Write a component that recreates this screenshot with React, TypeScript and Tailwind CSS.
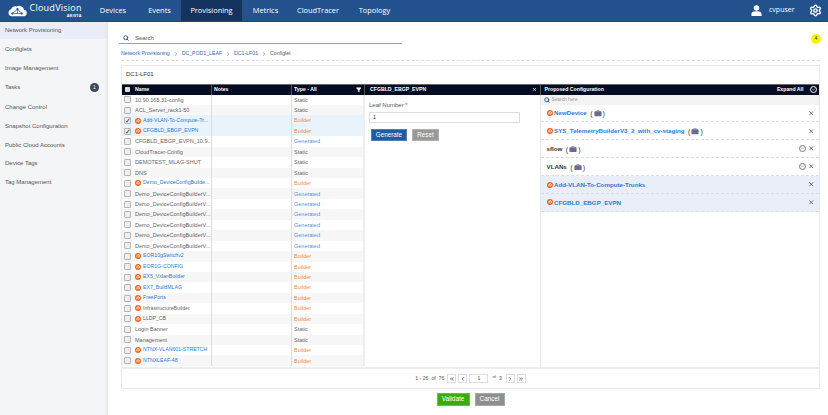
import { ChevronLeft, ChevronRight, ChevronsLeft, ChevronsRight, Filter, Search, Settings, X } from "lucide-react";

const navItems = [
  { title: "Devices", width: "w-[50px]" },
  { title: "Events", width: "w-[43px]" },
  { title: "Provisioning", width: "w-[61px]", active: true },
  { title: "Metrics", width: "w-[47px]" },
  { title: "CloudTracer", width: "w-[58px]" },
  { title: "Topology", width: "w-[55px]" },
];

const sideItems = ["Network Provisioning", "Configlets", "Image Management", "Tasks", "Change Control", "Snapshot Configuration", "Public Cloud Accounts", "Device Tags", "Tag Management"];

type Row = { name: string; type: "Static" | "Builder" | "Generated"; builder?: boolean; checked?: boolean; plain?: boolean };

const rows: Row[] = [
  { name: "10.90.165.31-config", type: "Static" },
  { name: "ACL_Server_rack1-50", type: "Static" },
  { name: "Add-VLAN-To-Compute-Tr...", type: "Builder", builder: true, checked: true },
  { name: "CFGBLD_EBGP_EVPN", type: "Builder", builder: true, checked: true },
  { name: "CFGBLD_EBGP_EVPN_10.9...", type: "Generated" },
  { name: "CloudTracer-Config", type: "Static" },
  { name: "DEMOTEST_MLAG-SHUT", type: "Static" },
  { name: "DNS", type: "Static" },
  { name: "Demo_DeviceConfigBuilde...", type: "Builder", builder: true },
  { name: "Demo_DeviceConfigBuilderV...", type: "Generated" },
  { name: "Demo_DeviceConfigBuilderV...", type: "Generated" },
  { name: "Demo_DeviceConfigBuilderV...", type: "Generated" },
  { name: "Demo_DeviceConfigBuilderV...", type: "Generated" },
  { name: "Demo_DeviceConfigBuilderV...", type: "Generated" },
  { name: "Demo_DeviceConfigBuilderV...", type: "Generated" },
  { name: "EOR10gSwitchv2", type: "Builder", builder: true },
  { name: "EOR1G-CONFIG", type: "Builder", builder: true },
  { name: "EX5_VxlanBuilder", type: "Builder", builder: true },
  { name: "EX7_BuildMLAG", type: "Builder", builder: true },
  { name: "FreePorts", type: "Builder", builder: true },
  { name: "InfrastructureBuilder", type: "Builder", builder: true, plain: true },
  { name: "LLDP_CB", type: "Builder", builder: true, plain: true },
  { name: "Login Banner", type: "Static" },
  { name: "Management", type: "Static" },
  { name: "NTNX-VLAN601-STRETCH", type: "Builder", builder: true },
  { name: "NTNXLEAF-48", type: "Builder", builder: true },
];

const proposed = [
  { name: "NewDevice", builder: true, box: true },
  { name: "SYS_TelemetryBuilderV3_2_with_cv-staging", builder: true, box: true },
  { name: "sflow", box: true, expand: true },
  { name: "VLANs", box: true, expand: true },
  { name: "Add-VLAN-To-Compute-Trunks", builder: true, added: true },
  { name: "CFGBLD_EBGP_EVPN", builder: true, added: true },
];

const typeColor = {
  Static: "text-[#666666]",
  Builder: "text-[#f58b3c]",
  Generated: "text-[#5b8fe0]",
};

function BuilderIcon() {
  return (
    <svg viewBox="0 0 12 12" className="w-[6px] h-[6px] shrink-0">
      <circle cx="6" cy="6" r="6" fill="#f2641e" />
      <path d="M4 8.5 L4 6 A2.4 2.4 0 1 1 6.6 8.2" fill="none" stroke="#ffffff" strokeWidth="1.8" />
    </svg>
  );
}

function BoxIcon() {
  return (
    <span className="flex items-center text-[7px] leading-none font-normal text-[#333333] gap-[1px]">
      (
      <svg viewBox="0 0 12 10" className="w-[8px] h-[6.5px]">
        <path d="M4 2 V1 H8 V2" fill="none" stroke="#6c6a94" strokeWidth="1" />
        <rect x="0.5" y="2" width="11" height="7.5" rx="1.2" fill="#6c6a94" />
      </svg>
      )
    </span>
  );
}

function ExpandIcon() {
  return (
    <span className="flex items-center justify-center w-[7px] h-[7px] rounded-full border border-current">
      <ChevronRight size={5} strokeWidth={3} className="rotate-90" />
    </span>
  );
}

function Checkbox({ checked }: { checked?: boolean }) {
  return (
    <span className="flex items-center justify-center w-[5px] h-[5px] rounded-[1px] border border-[#b5b5b5] bg-[#eeeeee] box-content shrink-0">
      {checked && <span className="text-[7px] leading-none text-[#222222]">✓</span>}
    </span>
  );
}

function Logo() {
  return (
    <div className="flex items-center w-[88px] pl-[7px] gap-[1.5px] shrink-0">
      <svg viewBox="0 0 24 15" className="w-[21px] h-[13px]">
        <path d="M5 14 A4 4 0 0 1 4.5 6.2 A5 5 0 0 1 11 3 A5.5 5.5 0 0 1 19.5 6.5 A3.8 3.8 0 0 1 19.5 14 Z" fill="#ffffff" />
        <path d="M6 11 L12 6 L17 11 M6 11 H17 M12 6 V11" fill="none" stroke="#24528f" strokeWidth="0.8" />
        <circle cx="6" cy="11" r="1.3" fill="#24528f" />
        <circle cx="12" cy="6" r="1.3" fill="#24528f" />
        <circle cx="17" cy="11" r="1.3" fill="#24528f" />
      </svg>
      <div className="flex flex-col items-end leading-none text-white">
        <span className="text-[9px] tracking-[0.25px]">CloudVision</span>
        <span className="text-[3.8px] font-bold tracking-[0.3px] mt-[2px]">ARISTA</span>
      </div>
    </div>
  );
}

function UserIcon() {
  return (
    <svg viewBox="0 0 12 12" className="w-[11px] h-[11px]">
      <circle cx="6" cy="3.2" r="3" fill="#ffffff" />
      <path d="M0.5 12 V9.6 C0.5 7.6 2.6 6.8 6 6.8 C9.4 6.8 11.5 7.6 11.5 9.6 V12 Z" fill="#ffffff" />
    </svg>
  );
}

export default function App() {
  return (
    <div className="w-[828px] h-[415px] overflow-hidden bg-white flex flex-col font-['Liberation_Sans',sans-serif] text-[#444444]">
      <header className="h-[22px] shrink-0 flex items-stretch bg-[#24528f] border-b border-[#1c4a86] font-['Open_Sans',sans-serif] text-white">
        <Logo />
        {navItems.map((item) => (
          <div key={item.title} className={`${item.width} flex items-center justify-center text-[7.4px] ${item.active ? "bg-[#14335f]" : ""}`}>
            {item.title}
          </div>
        ))}
        <div className="flex-1" />
        <div className="flex items-center">
          <UserIcon />
          <span className="ml-[7px] text-[7px] w-[31px]">cvpuser</span>
          <Settings size={13} strokeWidth={2.6} className="ml-[9px] mr-[6px]" />
        </div>
      </header>

      <div className="flex-1 flex min-h-0">
        <aside className="w-[108px] shrink-0 bg-[#f4f5f7] border-r-2 border-[#e8e8e8] text-[#555555] text-[6px]">
          {sideItems.map((item, idx) => (
            <div
              key={item}
              className={`flex items-center justify-between pl-[5px] pr-[7px] ${idx === 0 ? "h-[17.4px] mb-[0.6px] bg-[#e8edf7]" : item === "Tasks" ? "h-[21.2px]" : "h-[18.7px]"}`}
            >
              {item}
              {item === "Tasks" && (
                <span className="flex items-center justify-center w-[9px] h-[9px] rounded-full bg-[#3d4856] text-white text-[5px]">1</span>
              )}
            </div>
          ))}
        </aside>

        <main className="flex-1 min-w-0 pl-[13px] pr-[8px] flex flex-col relative">
          <div className="mt-[10px] -ml-[2px] w-[283px] h-[12px] flex items-center gap-[6px] border-b border-[#8da2c4] pl-[4px] pt-[1px] text-[5.9px] text-[#555555]">
            <Search size={6} strokeWidth={3.5} className="text-[#1f4f8f]" />
            Search
          </div>
          <div className="mt-[3.5px] h-[13px] pt-[1.5px] flex items-center gap-[3px] text-[5.2px] text-[#2f66ad] border-b border-dashed border-[#dddddd]">
            <span>Network Provisioning</span>
            <ChevronRight size={6} className="text-[#555555]" />
            <span>DC_POD1_LEAF</span>
            <ChevronRight size={6} className="text-[#555555]" />
            <span>DC1-LF01</span>
            <ChevronRight size={6} className="text-[#555555]" />
            <span className="text-[#555555]">Configlet</span>
          </div>
          <span className="absolute right-[7px] top-[12px] flex items-center justify-center w-[10px] h-[10px] rounded-full bg-[#f7f400] text-[5px] text-[#333333]">4</span>

          <section className="mt-[4.5px] h-[324px] border border-[#e8e8e8] flex flex-col">
            <div className="h-[17.5px] shrink-0 flex items-center pl-[4px] text-[6px] text-[#333333]">DC1-LF01</div>

            <div className="h-[11px] shrink-0 flex items-stretch bg-[#040c24] border-t border-[#666666] text-white text-[5.2px] font-bold">
              <div className="w-[90px] flex items-center gap-[5px] pl-[2.5px] border-r border-[#555555]">
                <span className="w-[5.5px] h-[5.5px] bg-[#dddddd] rounded-[1px]" />
                Name
              </div>
              <div className="w-[80px] flex items-center pl-[2px] border-r border-[#555555]">Notes</div>
              <div className="w-[73px] flex items-center justify-between pl-[2px] pr-[3px] border-r border-[#555555]">
                Type - All
                <Filter size={5.5} fill="#ffffff" />
              </div>
              <div className="w-[175.5px] flex items-center justify-between pl-[5px] pr-[3px] border-r border-[#555555]">
                CFGBLD_EBGP_EVPN
                <X size={5} strokeWidth={3.5} />
              </div>
              <div className="flex-1 flex items-center justify-between pl-[4px] pr-[2.5px]">
                Proposed Configuration
                <span className="flex items-center gap-[6px]">
                  Expand All
                  <ExpandIcon />
                </span>
              </div>
            </div>

            <div className="flex-1 min-h-0 flex">
              <div className="w-[243px] shrink-0">
                {rows.map((row, idx) => (
                  <div key={idx} className={`h-[10.44px] flex items-stretch text-[5.5px] ${row.checked ? "bg-[#e8f3fc]" : idx % 2 ? "bg-[#f7f7f7]" : "bg-white"}`}>
                    <div className="w-[90px] flex items-center pl-[2px] border-r border-[#dddddd] overflow-hidden whitespace-nowrap">
                      <Checkbox checked={row.checked} />
                      {row.builder ? (
                        <span className="flex items-center gap-[2px] ml-[4px]">
                          <BuilderIcon />
                          <span className={`text-[5.2px] ${row.plain ? "text-[#666666]" : "text-[#2a7bd6]"}`}>{row.name}</span>
                        </span>
                      ) : (
                        <span className="ml-[4px] text-[#666666]">{row.name}</span>
                      )}
                    </div>
                    <div className="w-[80px] border-r border-[#dddddd]" />
                    <div className={`w-[73px] flex items-center pl-[2px] border-r-2 border-[#eeeeee] ${typeColor[row.type]}`}>{row.type}</div>
                  </div>
                ))}
              </div>

              <div className="w-[175.5px] shrink-0 px-[4px] pt-[6px] border-r border-[#e5e5e5]">
                <div className="text-[6px] text-[#555555]">
                  Leaf Number <span className="text-[#e02020]">*</span>
                </div>
                <div className="mt-[2px] w-[151px] h-[11px] border border-[#dddddd] flex items-center pl-[3px] text-[5.5px] text-[#333333]">1</div>
                <div className="mt-[6px] ml-[2px] flex gap-[5px]">
                  <button className="w-[36px] h-[12px] bg-[#1f5ba6] border border-[#4d7fbd] text-white text-[6.3px]">Generate</button>
                  <button className="w-[27px] h-[12px] bg-[#999999] border border-[#b0b0b0] text-white text-[6.3px]">Reset</button>
                </div>
              </div>

              <div className="flex-1 min-w-0">
                <div className="h-[10px] bg-[#f3f3f3] flex items-center pl-[3px] gap-[2px] text-[4.8px] text-[#999999]">
                  <Search size={6} strokeWidth={3.5} className="text-[#1f4f8f]" />
                  Search here
                </div>
                {proposed.map((item) => (
                  <div key={item.name} className={`h-[17.9px] flex items-center justify-between pl-[6px] pr-[5px] border-b border-dashed border-[#dddddd] text-[6.2px] font-bold ${item.added ? "bg-[#e9eef8]" : "bg-white"}`}>
                    <span className="flex items-center gap-[1.5px]">
                      {item.builder && <BuilderIcon />}
                      <span className={item.builder ? "text-[#2a7bd6]" : "text-[#333333]"}>{item.name}</span>
                      {item.box && <span className="ml-[2px] mt-[1px]"><BoxIcon /></span>}
                    </span>
                    <span className="flex items-center gap-[1.5px] text-[#777777]">
                      {item.expand && <ExpandIcon />}
                      <X size={6.5} strokeWidth={3} className="text-[#555555]" />
                    </span>
                  </div>
                ))}
              </div>
            </div>

            <div className="h-[21px] shrink-0 border-t-2 border-[#eeeeee] flex items-center justify-center gap-[2px] text-[5.2px] text-[#555555]">
              <span className="mr-[1px]">1 - 26 &nbsp;of&nbsp; 76</span>
              <span className="w-[9px] h-[9px] border border-[#dddddd] flex items-center justify-center"><ChevronsLeft size={6} strokeWidth={3} /></span>
              <span className="w-[9px] h-[9px] border border-[#dddddd] flex items-center justify-center"><ChevronLeft size={6} strokeWidth={3} /></span>
              <span className="w-[19px] h-[9px] border border-[#dddddd] flex items-center justify-center">1</span>
              <span className="ml-[2px] mr-[2px] flex items-center gap-[3px]"><span className="text-[4.2px] -mt-[2px]">of</span><span>3</span></span>
              <span className="w-[9px] h-[9px] border border-[#dddddd] flex items-center justify-center"><ChevronRight size={6} strokeWidth={3} /></span>
              <span className="w-[9px] h-[9px] border border-[#dddddd] flex items-center justify-center"><ChevronsRight size={6} strokeWidth={3} /></span>
            </div>
          </section>

          <div className="mt-[4px] flex justify-center gap-[5px] text-[6.4px] text-white">
            <button className="w-[33px] h-[12.5px] bg-[#38ac0c] border border-[#62c43c]">Validate</button>
            <button className="w-[30px] h-[12.5px] bg-[#8e8e8e] border border-[#a8a8a8]">Cancel</button>
          </div>
        </main>
      </div>
    </div>
  );
}
